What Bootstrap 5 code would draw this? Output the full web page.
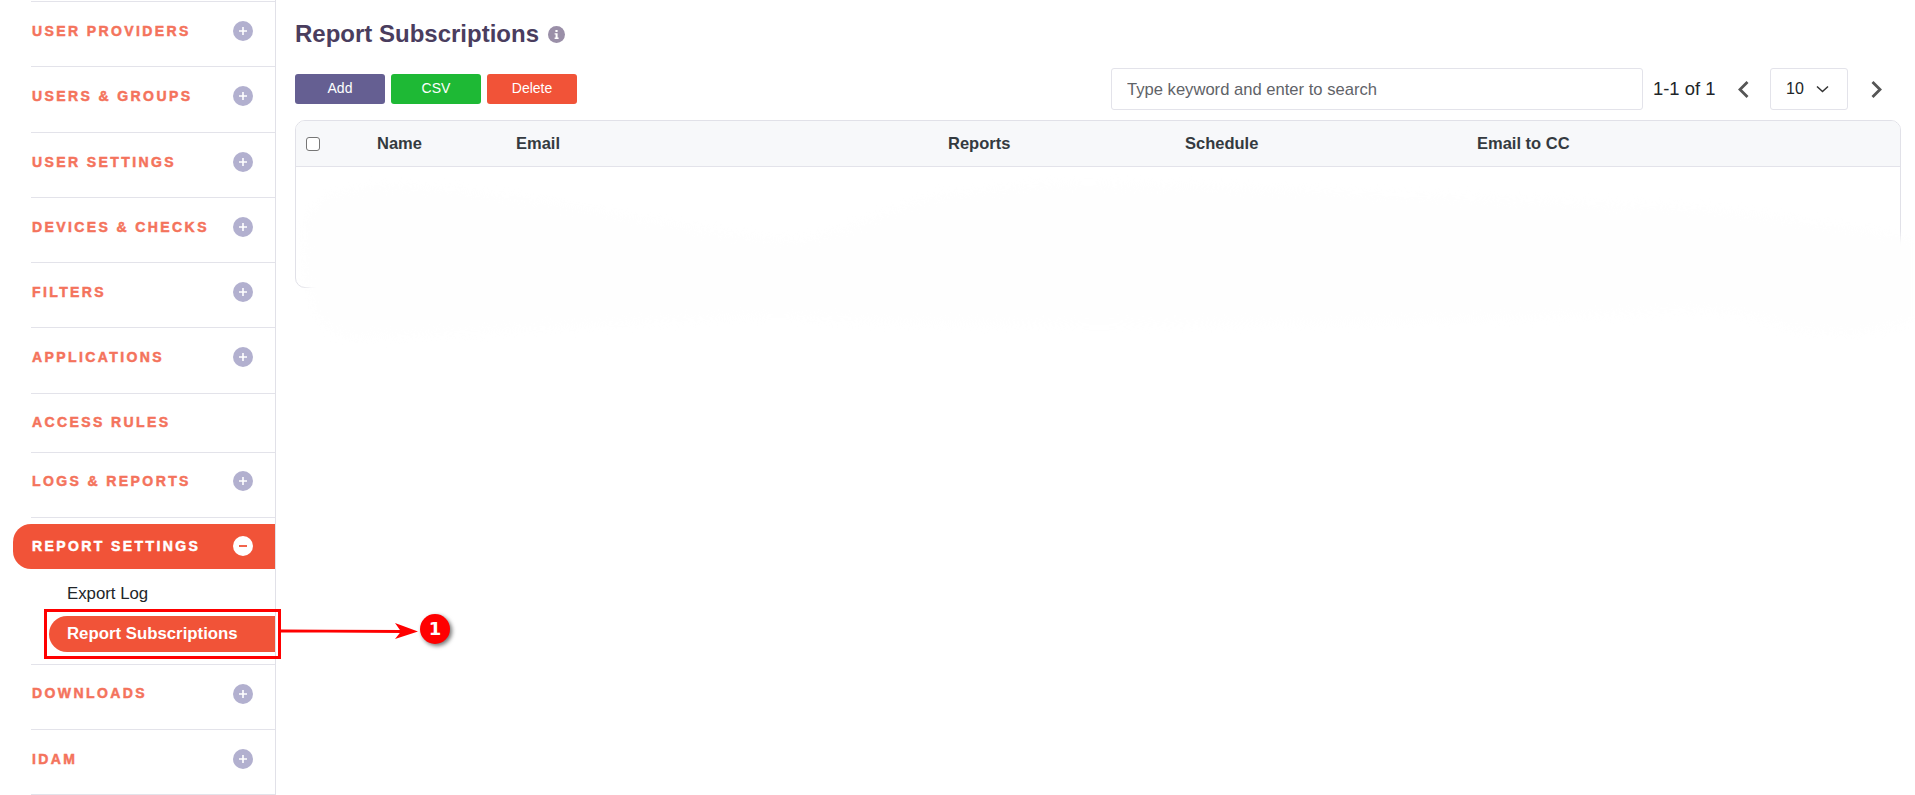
<!DOCTYPE html>
<html lang="en">
<head>
<meta charset="utf-8">
<title>Report Subscriptions</title>
<link href="https://cdn.jsdelivr.net/npm/bootstrap@5.3.0/dist/css/bootstrap.min.css" rel="stylesheet">
<style>
html,body{height:795px;overflow:hidden;background:#fff;}
body{font-family:"Liberation Sans",Arial,sans-serif;position:relative;color:#212529;}
.shell{height:795px;}
.side{width:276px;flex:none;border-right:1px solid #e1e1e8;padding-left:13px;padding-top:1px;height:795px;overflow:hidden;}
.side-row{margin-left:18px;height:65.25px;border-top:1px solid #e3e3ea;padding:0 22px 5px 1px;display:flex;align-items:center;justify-content:space-between;color:#f4735c;font-weight:700;font-size:14px;letter-spacing:2.4px;-webkit-text-stroke:.5px #f4735c;text-decoration:none;}
.side-row.tall{height:59px;padding-bottom:0;}
.side-row.plain{height:65px;padding-bottom:7px;}
.side-row.tail{height:66px;border-bottom:1px solid #e3e3ea;}
.plus{width:20px;height:20px;border-radius:50%;background:#b2b0cf;color:#fff;flex:none;display:flex;align-items:center;justify-content:center;margin-bottom:1px;}
.side-row.plain .plus{margin-bottom:0;}
.side-open{border-top:1px solid #e3e3ea;margin-left:18px;height:7.5px;}
.pill-head{height:45px;background:#f15338;color:#fff;border-radius:18px 0 0 18px;display:flex;align-items:center;justify-content:space-between;padding:0 22px 0 19px;font-weight:700;font-size:14px;letter-spacing:2.4px;-webkit-text-stroke:.5px #fff;}
.plus.on{background:#fff;margin-bottom:2px;}
.sub-link{display:block;margin-left:36px;height:36px;line-height:36px;padding-left:18px;font-size:16.8px;color:#212529;text-decoration:none;}
.sub-link.first{margin-top:5px;height:42px;line-height:40px;}
.sub-link.on{background:#f15338;color:#fff;font-weight:700;border-radius:18px 0 0 18px;line-height:35px;}
.sub-end{height:12px;}
.page{padding:0 14px 0 19px;min-width:0;}
.page-title{font-size:24px;font-weight:700;color:#4a3d5e;margin:0;line-height:28px;padding-top:20px;height:74px;display:flex;gap:9px;}
.info{width:17px;height:17px;border-radius:50%;background:#9a8fa8;margin-top:6px;flex:none;}
.tool-row{height:46px;align-items:flex-start;}
.act{width:90px;height:30px;margin-top:0;padding:0 0 2px;font-size:14px;color:#fff;border:0;border-radius:3px;margin-right:6px;}
.act-add{background:#655f92;}
.act-csv{background:#1eb935;}
.act-del{background:#f15338;}
.searchbox{width:532px;height:42px;margin-top:-6px;border:1px solid #e3e3ea;border-radius:3px;font-size:16.6px;padding:1px 15px 0;color:#212529;}
.searchbox::placeholder{color:#5f6368;opacity:1;}
.pager{margin-top:-6px;height:42px;font-size:16px;color:#212529;width:258px;}
.pg-count{width:73px;padding-left:10px;font-size:18.4px;white-space:nowrap;flex:none;}
.pg-size{width:78px;height:42px;border:1px solid #e3e3ea;border-radius:3px;padding:0 18px 0 15px;flex:none;}
.pg-arrow{width:54px;text-align:center;flex:none;}
.pg-arrow.nx{width:53px;padding-left:3px;}
.grid-wrap{border:1px solid #e1e1e8;border-radius:10px;height:168px;overflow:hidden;margin-right:0;}
.grid-head{height:46px;background:#f7f8fa;border-bottom:1px solid #e3e3ea;font-size:16.5px;font-weight:700;color:#343a40;position:relative;}
.c-box{width:81px;padding-left:10px;}
.c-box .form-check-input{width:14px;height:14px;margin:0;border-color:#767676;border-radius:3px;display:block;}
.c-name{width:139px;}
.c-email{width:432px;}
.c-rep{width:237px;}
.c-sch{width:292px;}
.smudge{position:absolute;left:0;top:0;filter:blur(5px);pointer-events:none;}
.anno-box{position:absolute;left:44px;top:609px;width:237px;height:50px;border:3px solid #f00;}
.anno-arrow{position:absolute;left:281px;top:616px;}
.anno-num{position:absolute;left:420px;top:614px;width:30px;height:30px;border-radius:50%;background:#f00;color:#fff;font-weight:700;font-size:18px;line-height:29px;text-align:center;box-shadow:2px 2px 4px rgba(0,0,0,.55);font-family:"DejaVu Sans",sans-serif;}
</style>
</head>
<body>
<div class="d-flex shell">
  <nav class="side">
    <a class="side-row" href="#">USER PROVIDERS <span class="plus"><svg width="10" height="10" viewBox="0 0 10 10"><path d="M5 1v8M1 5h8" stroke="#fff" stroke-width="1.6"/></svg></span></a>
    <a class="side-row" href="#">USERS &amp; GROUPS <span class="plus"><svg width="10" height="10" viewBox="0 0 10 10"><path d="M5 1v8M1 5h8" stroke="#fff" stroke-width="1.6"/></svg></span></a>
    <a class="side-row" href="#">USER SETTINGS <span class="plus"><svg width="10" height="10" viewBox="0 0 10 10"><path d="M5 1v8M1 5h8" stroke="#fff" stroke-width="1.6"/></svg></span></a>
    <a class="side-row" href="#">DEVICES &amp; CHECKS <span class="plus"><svg width="10" height="10" viewBox="0 0 10 10"><path d="M5 1v8M1 5h8" stroke="#fff" stroke-width="1.6"/></svg></span></a>
    <a class="side-row" href="#">FILTERS <span class="plus"><svg width="10" height="10" viewBox="0 0 10 10"><path d="M5 1v8M1 5h8" stroke="#fff" stroke-width="1.6"/></svg></span></a>
    <a class="side-row" href="#">APPLICATIONS <span class="plus"><svg width="10" height="10" viewBox="0 0 10 10"><path d="M5 1v8M1 5h8" stroke="#fff" stroke-width="1.6"/></svg></span></a>
    <a class="side-row tall" href="#">ACCESS RULES</a>
    <a class="side-row plain" href="#">LOGS &amp; REPORTS <span class="plus"><svg width="10" height="10" viewBox="0 0 10 10"><path d="M5 1v8M1 5h8" stroke="#fff" stroke-width="1.6"/></svg></span></a>
    <div class="side-open"></div>
    <div class="pill-head">REPORT SETTINGS <span class="plus on"><svg width="10" height="10" viewBox="0 0 10 10"><path d="M1 5h8" stroke="#f15338" stroke-width="1.8"/></svg></span></div>
    <a class="sub-link first" href="#">Export Log</a>
    <a class="sub-link on" href="#">Report Subscriptions</a>
    <div class="sub-end"></div>
    <a class="side-row plain" href="#">DOWNLOADS <span class="plus"><svg width="10" height="10" viewBox="0 0 10 10"><path d="M5 1v8M1 5h8" stroke="#fff" stroke-width="1.6"/></svg></span></a>
    <a class="side-row tail" href="#">IDAM <span class="plus"><svg width="10" height="10" viewBox="0 0 10 10"><path d="M5 1v8M1 5h8" stroke="#fff" stroke-width="1.6"/></svg></span></a>
  </nav>
  <main class="page flex-grow-1">
    <h1 class="page-title">Report Subscriptions <span class="info d-flex align-items-center justify-content-center"><svg width="9" height="11" viewBox="0 0 9 11"><path d="M3.4 1h2.2v2H3.4zM2.6 4.2h3v4.4h1V10H2.6V8.6h1V5.600h-1z" fill="#fff"/></svg></span></h1>
    <div class="d-flex tool-row">
      <button type="button" class="btn act act-add">Add</button>
      <button type="button" class="btn act act-csv">CSV</button>
      <button type="button" class="btn act act-del">Delete</button>
      <div class="d-flex ms-auto">
        <input type="text" class="form-control searchbox" placeholder="Type keyword and enter to search">
        <div class="d-flex align-items-center pager">
          <span class="pg-count">1-1 of 1</span>
          <span class="pg-arrow"><svg width="13" height="19" viewBox="0 0 13 19"><path d="M10.500 2 3 9.500l7.500 7.500" fill="none" stroke="#555" stroke-width="2.800"/></svg></span>
          <span class="d-flex align-items-center justify-content-between pg-size">10 <svg width="13" height="8" viewBox="0 0 13 8"><path d="M1 1.500 6.500 6.500 12 1.500" fill="none" stroke="#333" stroke-width="1.500"/></svg></span>
          <span class="pg-arrow nx"><svg width="13" height="19" viewBox="0 0 13 19"><path d="M2.500 2 10 9.500 2.500 17" fill="none" stroke="#555" stroke-width="2.800"/></svg></span>
        </div>
      </div>
    </div>
    <div class="grid-wrap">
      <div class="d-flex align-items-center grid-head">
        <div class="c-box"><input class="form-check-input" type="checkbox" aria-label="Select all"></div>
        <div class="c-name">Name</div>
        <div class="c-email">Email</div>
        <div class="c-rep">Reports</div>
        <div class="c-sch">Schedule</div>
        <div>Email to CC</div>
      </div>
    </div>
  </main>
</div>
<svg class="smudge" width="1915" height="345" viewBox="0 0 1915 345"><path d="M304 240C304 200 330 186 400 186C520 190 700 235 790 240C850 240 900 195 970 192C1050 178 1150 185 1300 190C1500 200 1650 205 1700 208C1800 220 1860 228 1915 240L1915 318C1880 335 1830 335 1790 328C1760 315 1720 310 1700 310C1400 325 1000 330 800 317C680 315 500 335 350 337C315 330 304 300 304 240Z" fill="#fefefe"/></svg>
<div class="anno-box"></div>
<svg class="anno-arrow" width="140" height="30" viewBox="0 0 140 30"><path d="M0 15C40 15 90 15.500 122 15.500" stroke="#f00" stroke-width="2.800" fill="none"/><path d="M114 7 137 15.500 114 23 120 15.500z" fill="#f00"/></svg>
<div class="anno-num">1</div>
</body>
</html>
